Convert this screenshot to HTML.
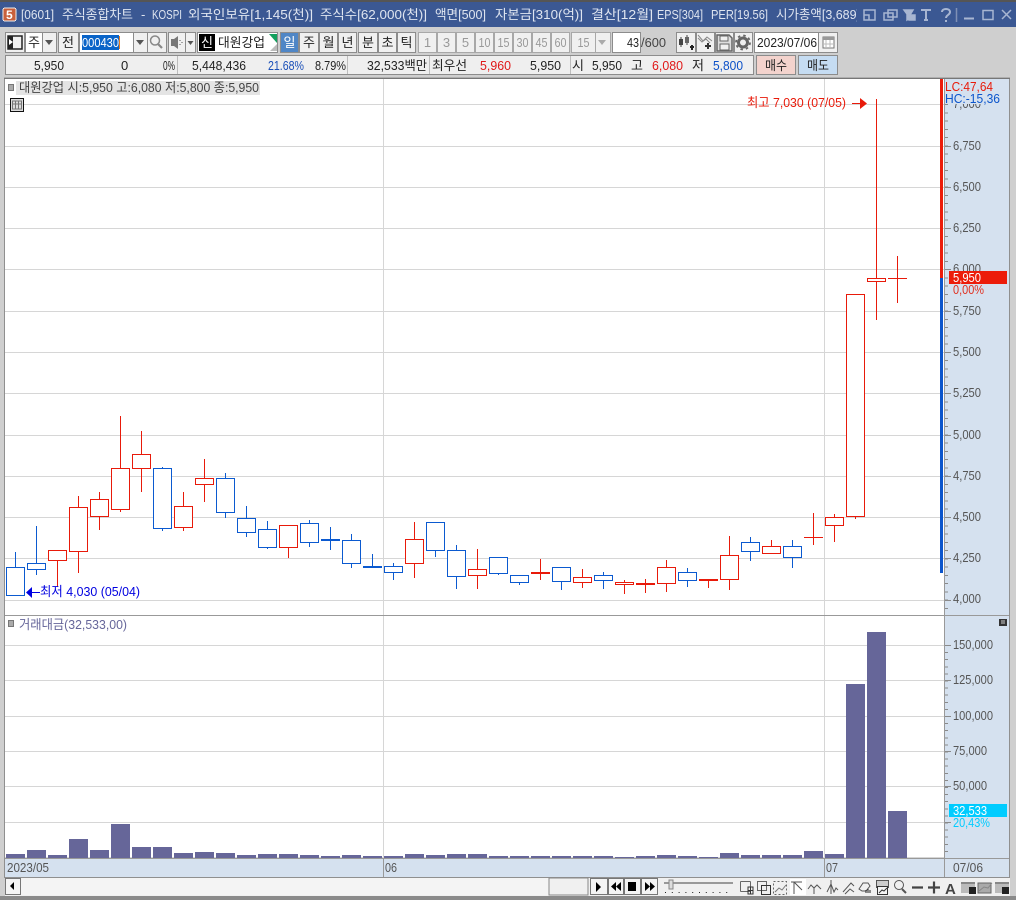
<!DOCTYPE html>
<html lang="ko"><head><meta charset="utf-8"><title>주식종합차트</title>
<style>
html,body{margin:0;padding:0;width:1016px;height:900px;overflow:hidden;background:#cfcfcf}
svg{display:block}
text{font-family:"Liberation Sans","Noto Sans CJK KR",sans-serif;font-size:13px;fill:#222;white-space:pre}
.t text{fill:#dfe5f0}
.ax text{fill:#555}
.g text{fill:#999}
.b{fill:#f0f0f0;stroke:#8c8c8c}
rect,line{shape-rendering:crispEdges}
</style></head><body>
<svg width="1016" height="900" viewBox="0 0 1016 900" xmlns="http://www.w3.org/2000/svg">
<rect width="1016" height="900" fill="#cfcfcf"/>
<rect y="0" width="1016" height="2" fill="#555"/>
<rect y="2" width="1016" height="25" fill="#3b5893"/>
<rect x="3" y="8" width="13" height="13" rx="2" fill="#c8603c" stroke="#eee"/>
<text x="6" y="19" style="fill:#fff;font-weight:bold;font-size:12px">5</text>
<svg x="0" y="0" width="857" height="27"><g class="t">
<text x="21" y="19" textLength="33" lengthAdjust="spacingAndGlyphs">[0601]</text>
<text x="62" y="19" textLength="71" lengthAdjust="spacingAndGlyphs">주식종합차트</text>
<text x="141" y="19">-</text>
<text x="152" y="19" textLength="30" lengthAdjust="spacingAndGlyphs">KOSPI</text>
<text x="188" y="19" textLength="125" lengthAdjust="spacingAndGlyphs">외국인보유[1,145(천)]</text>
<text x="320" y="19" textLength="107" lengthAdjust="spacingAndGlyphs">주식수[62,000(천)]</text>
<text x="435" y="19" textLength="51" lengthAdjust="spacingAndGlyphs">액면[500]</text>
<text x="495" y="19" textLength="88" lengthAdjust="spacingAndGlyphs">자본금[310(억)]</text>
<text x="591" y="19" textLength="62" lengthAdjust="spacingAndGlyphs">결산[12월]</text>
<text x="657" y="19" textLength="46" lengthAdjust="spacingAndGlyphs">EPS[304]</text>
<text x="711" y="19" textLength="57" lengthAdjust="spacingAndGlyphs">PER[19.56]</text>
<text x="776" y="19" textLength="84" lengthAdjust="spacingAndGlyphs">시가총액[3,689]</text>
</g></svg>
<g fill="none" stroke="#a8b6d2" stroke-width="1.5">
<path d="M864 10h11v10h-11zM864 15h5v5"/>
<path d="M888 10h9v7h-9zM884 13h9v7h-9z"/>
<path d="M909 15h6v5h-6z" fill="#a8b6d2"/><path d="M904 10h9l-3 5v3l-3 2v-6z" fill="#a8b6d2"/>
<path d="M921 10h10M926 10v10M924 20h4" stroke-width="2"/>
<path d="M942 12c0-4 8-4 8 0 0 3-4 3-4 6M946 20v2" stroke-width="2"/>
<path d="M956.500 8v14" stroke="#7f90b5"/>
<path d="M964 18.500h10" stroke-width="2"/>
<path d="M983 10.500h10v9h-10z"/>
<path d="M1002 10l9 9M1011 10l-9 9"/>
</g>

<!-- toolbar row 1 -->
<g class="b">
<rect x="5.500" y="32.500" width="19" height="20"/><rect x="25.500" y="32.500" width="17" height="20" fill="#fff"/><rect x="42.500" y="32.500" width="14" height="20"/>
<rect x="58.500" y="32.500" width="20" height="20"/>
<rect x="79.500" y="32.500" width="54" height="20" fill="#fff"/><rect x="133.500" y="32.500" width="14" height="20"/><rect x="147.500" y="32.500" width="19" height="20"/>
<rect x="168.500" y="32.500" width="17" height="20"/><rect x="185.500" y="32.500" width="10" height="20"/>
<rect x="197.500" y="32.500" width="80" height="20" fill="#fff"/>
<rect x="280.500" y="32.500" width="18" height="20" fill="#4f86c6"/><rect x="299.500" y="32.500" width="19" height="20"/><rect x="319.500" y="32.500" width="18" height="20"/><rect x="338.500" y="32.500" width="18" height="20"/>
<rect x="358.500" y="32.500" width="19" height="20"/><rect x="378.500" y="32.500" width="18" height="20"/><rect x="397.500" y="32.500" width="18" height="20"/>
<g style="stroke:#a8a8a8">
<rect x="418.500" y="32.500" width="18" height="20"/><rect x="437.500" y="32.500" width="18" height="20"/><rect x="456.500" y="32.500" width="18" height="20"/><rect x="475.500" y="32.500" width="18" height="20"/><rect x="494.500" y="32.500" width="18" height="20"/><rect x="513.500" y="32.500" width="18" height="20"/><rect x="532.500" y="32.500" width="18" height="20"/><rect x="551.500" y="32.500" width="18" height="20"/>
<rect x="571.500" y="32.500" width="24" height="20"/><rect x="595.500" y="32.500" width="15" height="20"/>
</g>
<rect x="612.500" y="32.500" width="28" height="20" fill="#fff"/>
<rect x="676.500" y="32.500" width="19" height="20"/><rect x="696.500" y="32.500" width="18" height="20"/><rect x="715.500" y="32.500" width="18" height="20"/><rect x="734.500" y="32.500" width="18" height="20"/>
<rect x="754.500" y="32.500" width="64" height="20" fill="#fff"/><rect x="818.500" y="32.500" width="19" height="20"/>
</g>
<!-- button icons -->
<path d="M8 36h14v13h-14z" fill="none" stroke="#222" stroke-width="1.500"/><path d="M8 36h5v13h-5z" fill="#222"/><path d="M9 39l4 3-4 3z" fill="#fff"/>
<path d="M45 40h8l-4 5z" fill="#555"/><path d="M136 40h8l-4 5z" fill="#555"/><path d="M187.500 41h6l-3 4z" fill="#555"/><path d="M598 40h8l-4 5z" fill="#aaa"/>
<circle cx="155" cy="40.500" r="4.500" fill="none" stroke="#888" stroke-width="1.500"/><path d="M158 44l4 4" stroke="#888" stroke-width="2.200"/>
<path d="M171 39h3l4-3v13l-4-3h-3z" fill="#777"/><path d="M180 40v1M180 44v1M182 42v1" stroke="#555"/>
<rect x="199" y="34" width="16" height="17" fill="#000"/>
<path d="M269 34h8v9z" fill="#13a05e"/><path d="M277 44v7h-7z" fill="#bbb"/>
<g text-anchor="middle">
<text x="34" y="47">주</text><text x="68" y="47">전</text>
<text x="207" y="47" style="fill:#fff">신</text>
<text x="289.500" y="47" style="fill:#fff">일</text><text x="309" y="47">주</text><text x="328.500" y="47">월</text><text x="347.500" y="47">년</text>
<text x="368" y="47">분</text><text x="387.500" y="47">초</text><text x="406.500" y="47">틱</text>
</g>
<rect x="82" y="35" width="37" height="15" fill="#0a64c8"/><rect x="119" y="36" width="1" height="13" fill="#e87a1a"/>
<text x="82" y="47" textLength="37" lengthAdjust="spacingAndGlyphs" style="fill:#fff">000430</text>
<text x="218" y="47" textLength="47" lengthAdjust="spacingAndGlyphs">대원강업</text>
<g class="g" text-anchor="middle">
<text x="427.500" y="47">1</text><text x="446.500" y="47">3</text><text x="465.500" y="47">5</text><text x="484.500" y="47" textLength="12" lengthAdjust="spacingAndGlyphs">10</text><text x="503.500" y="47" textLength="12" lengthAdjust="spacingAndGlyphs">15</text><text x="522.500" y="47" textLength="12" lengthAdjust="spacingAndGlyphs">30</text><text x="541.500" y="47" textLength="12" lengthAdjust="spacingAndGlyphs">45</text><text x="560.500" y="47" textLength="12" lengthAdjust="spacingAndGlyphs">60</text><text x="583.500" y="47" textLength="12" lengthAdjust="spacingAndGlyphs">15</text>
</g>
<text x="627" y="47" textLength="12" lengthAdjust="spacingAndGlyphs">43</text>
<text x="641" y="47" textLength="25" lengthAdjust="spacingAndGlyphs" style="fill:#444">/600</text>
<!-- right tool icons -->
<path d="M681 37v10M687 35v10" stroke="#444"/><rect x="679" y="39" width="4" height="6" fill="#444"/><rect x="685" y="37" width="4" height="6" fill="#666"/><path d="M690 47h4M692 45v5" stroke="#222" stroke-width="2"/>
<path d="M698 38l4 4 4-3 4 4M698 35l5 6 4-4 5 4" fill="none" stroke="#888"/><path d="M705 46h6M708 43v6" stroke="#333" stroke-width="2"/>
<path d="M717 35h12l3 3v13h-15z" fill="#ddd" stroke="#666" stroke-width="1.500"/><rect x="720" y="36" width="8" height="5" fill="#f0f0f0" stroke="#666"/><rect x="720" y="44" width="9" height="6" fill="#f0f0f0" stroke="#666"/>
<circle cx="743" cy="42.500" r="4.500" fill="none" stroke="#666" stroke-width="3"/><circle cx="743" cy="42.500" r="7" fill="none" stroke="#666" stroke-width="1.800" stroke-dasharray="2.500 3"/>
<text x="757" y="47" textLength="60" lengthAdjust="spacingAndGlyphs">2023/07/06</text>
<rect x="823" y="37" width="11" height="11" fill="#fff" stroke="#777"/><rect x="823" y="37" width="11" height="3" fill="#999"/><path d="M826 40v8M830 40v8M823 44h11" stroke="#bbb"/>

<!-- row 2 -->
<rect x="5.500" y="55.500" width="748" height="19" fill="#efefef" stroke="#8c8c8c"/>
<path d="M177.500 56v18M347.500 56v18M429.500 56v18M570.500 56v18" stroke="#bdbdbd"/>
<text x="34" y="70" textLength="30" lengthAdjust="spacingAndGlyphs">5,950</text>
<text x="121" y="70">0</text>
<text x="163" y="70" textLength="12" lengthAdjust="spacingAndGlyphs">0%</text>
<text x="192" y="70" textLength="54" lengthAdjust="spacingAndGlyphs">5,448,436</text>
<text x="268" y="70" textLength="36" lengthAdjust="spacingAndGlyphs" style="fill:#1a4fb8">21.68%</text>
<text x="315" y="70" textLength="31" lengthAdjust="spacingAndGlyphs">8.79%</text>
<text x="367" y="70" textLength="60" lengthAdjust="spacingAndGlyphs">32,533백만</text>
<text x="432" y="70" textLength="35" lengthAdjust="spacingAndGlyphs">최우선</text>
<text x="480" y="70" textLength="31" lengthAdjust="spacingAndGlyphs" style="fill:#e01818">5,960</text>
<text x="530" y="70" textLength="31" lengthAdjust="spacingAndGlyphs">5,950</text>
<text x="572" y="70">시</text>
<text x="592" y="70" textLength="30" lengthAdjust="spacingAndGlyphs">5,950</text>
<text x="631" y="70">고</text>
<text x="652" y="70" textLength="31" lengthAdjust="spacingAndGlyphs" style="fill:#e01818">6,080</text>
<text x="692" y="70">저</text>
<text x="713" y="70" textLength="30" lengthAdjust="spacingAndGlyphs" style="fill:#0b50c8">5,800</text>
<rect x="756.500" y="55.500" width="39" height="19" fill="#f3d3cd" stroke="#8c8c8c"/>
<rect x="798.500" y="55.500" width="39" height="19" fill="#c5dcf2" stroke="#8c8c8c"/>
<text x="765" y="70" textLength="22" lengthAdjust="spacingAndGlyphs">매수</text>
<text x="807" y="70" textLength="22" lengthAdjust="spacingAndGlyphs">매도</text>

<!-- chart area -->
<rect x="5" y="79" width="939" height="780" fill="#fff"/>
<rect x="945" y="79" width="64" height="798" fill="#d5e1ef"/>
<rect x="5" y="859" width="940" height="18" fill="#d5e1ef"/>
<g fill="none" stroke="#d6d6d6">
<path d="M5 104.500H944M5 146.500H944M5 187.500H944M5 228.500H944M5 269.500H944M5 311.500H944M5 352.500H944M5 393.500H944M5 435.500H944M5 476.500H944M5 517.500H944M5 558.500H944M5 600.500H944"/>
<path d="M5 645.500H944M5 680.500H944M5 716.500H944M5 751.500H944M5 786.500H944M5 822.500H944M5 857.500H944"/>
<path d="M383.500 79V859M824.500 79V859"/>
</g>
<path d="M4.500 78V877.500H1009.500V78H4.500z" fill="none" stroke="#8f8f8f"/>
<path d="M4 78.500H1010" stroke="#777"/>
<path d="M5 615.500H1009M5 858.500H1009M944.500 79V877M383.500 859V877M824.500 859V877" stroke="#999"/>
<rect x="940" y="79" width="3" height="199" fill="#ec1c0a"/>
<rect x="940" y="278" width="3" height="295" fill="#0b55cc"/>
<!-- axis ticks -->
<g fill="none" stroke="#8a8a8a">
<line x1="946.500" y1="104" x2="946.500" y2="615" stroke-width="3" stroke-dasharray="1 7.260"/>
<line x1="946.500" y1="645" x2="946.500" y2="858" stroke-width="3" stroke-dasharray="1 6.100"/>
<path d="M945 146.500h6M945 187.500h6M945 228.500h6M945 269.500h6M945 311.500h6M945 352.500h6M945 393.500h6M945 435.500h6M945 476.500h6M945 517.500h6M945 558.500h6M945 600.500h6M945 645.500h6M945 680.500h6M945 716.500h6M945 751.500h6M945 786.500h6M945 822.500h6"/>
</g>
<g class="ax">
<text x="953" y="108" textLength="28" lengthAdjust="spacingAndGlyphs">7,000</text>
<rect x="945" y="79" width="62" height="25" fill="#d5e1ef"/>
<text x="953" y="150" textLength="28" lengthAdjust="spacingAndGlyphs">6,750</text>
<text x="953" y="191" textLength="28" lengthAdjust="spacingAndGlyphs">6,500</text>
<text x="953" y="232" textLength="28" lengthAdjust="spacingAndGlyphs">6,250</text>
<text x="953" y="273" textLength="28" lengthAdjust="spacingAndGlyphs">6,000</text>
<text x="953" y="315" textLength="28" lengthAdjust="spacingAndGlyphs">5,750</text>
<text x="953" y="356" textLength="28" lengthAdjust="spacingAndGlyphs">5,500</text>
<text x="953" y="397" textLength="28" lengthAdjust="spacingAndGlyphs">5,250</text>
<text x="953" y="439" textLength="28" lengthAdjust="spacingAndGlyphs">5,000</text>
<text x="953" y="480" textLength="28" lengthAdjust="spacingAndGlyphs">4,750</text>
<text x="953" y="521" textLength="28" lengthAdjust="spacingAndGlyphs">4,500</text>
<text x="953" y="562" textLength="28" lengthAdjust="spacingAndGlyphs">4,250</text>
<text x="953" y="603" textLength="28" lengthAdjust="spacingAndGlyphs">4,000</text>
<text x="953" y="649" textLength="40" lengthAdjust="spacingAndGlyphs">150,000</text>
<text x="953" y="684" textLength="40" lengthAdjust="spacingAndGlyphs">125,000</text>
<text x="953" y="720" textLength="40" lengthAdjust="spacingAndGlyphs">100,000</text>
<text x="953" y="755" textLength="34" lengthAdjust="spacingAndGlyphs">75,000</text>
<text x="953" y="790" textLength="34" lengthAdjust="spacingAndGlyphs">50,000</text>
<text x="953" y="872" textLength="30" lengthAdjust="spacingAndGlyphs">07/06</text>
<text x="7" y="872" textLength="42" lengthAdjust="spacingAndGlyphs">2023/05</text>
<text x="385" y="872" textLength="12" lengthAdjust="spacingAndGlyphs">06</text>
<text x="826" y="872" textLength="12" lengthAdjust="spacingAndGlyphs">07</text>
</g>
<text x="945" y="91" textLength="48" lengthAdjust="spacingAndGlyphs" style="fill:#e81a0a">LC:47,64</text>
<text x="945" y="103" textLength="55" lengthAdjust="spacingAndGlyphs" style="fill:#0b55cc">HC:-15,36</text>
<rect x="949" y="271" width="58" height="13" fill="#ec1c0a"/>
<text x="953" y="282" textLength="28" lengthAdjust="spacingAndGlyphs" style="fill:#fff">5,950</text>
<text x="953" y="294" textLength="31" lengthAdjust="spacingAndGlyphs" style="fill:#e03020">0,00%</text>
<rect x="949" y="804" width="58" height="13" fill="#00ccff"/>
<text x="953" y="815" textLength="34" lengthAdjust="spacingAndGlyphs" style="fill:#fff">32,533</text>
<text x="953" y="827" textLength="37" lengthAdjust="spacingAndGlyphs" style="fill:#00ccff">20,43%</text>

<!-- labels -->
<rect x="8.500" y="84.500" width="5" height="6" fill="#aaa" stroke="#777"/>
<rect x="16" y="81" width="244" height="14" fill="#e4e4e4"/>
<text x="19" y="92" textLength="240" lengthAdjust="spacingAndGlyphs" style="fill:#444">대원강업 시:5,950 고:6,080 저:5,800 종:5,950</text>
<rect x="10.500" y="98.500" width="13" height="13" fill="#ddd" stroke="#111"/><path d="M12.500 101h9v8h-9zM15.500 101v8M18.500 101v8M12.500 104h9" fill="none" stroke="#777"/>
<rect x="8.500" y="620.500" width="5" height="6" fill="#aaa" stroke="#777"/>
<text x="19" y="629" textLength="108" lengthAdjust="spacingAndGlyphs" style="fill:#66669a">거래대금(32,533,00)</text>
<rect x="999" y="619" width="8" height="7" fill="#333"/><path d="M1001 621h4M1001 623h4" stroke="#ccc"/>

<!-- volume bars -->
<g fill="#666699">
<rect x="6" y="854" width="19" height="4"/><rect x="27" y="850" width="19" height="8"/><rect x="48" y="855" width="19" height="3"/><rect x="69" y="839" width="19" height="19"/><rect x="90" y="850" width="19" height="8"/><rect x="111" y="824" width="19" height="34"/><rect x="132" y="847" width="19" height="11"/><rect x="153" y="847" width="19" height="11"/><rect x="174" y="853" width="19" height="5"/><rect x="195" y="852" width="19" height="6"/><rect x="216" y="853" width="19" height="5"/><rect x="237" y="855" width="19" height="3"/><rect x="258" y="854" width="19" height="4"/><rect x="279" y="854" width="19" height="4"/><rect x="300" y="855" width="19" height="3"/><rect x="321" y="856" width="19" height="2"/><rect x="342" y="855" width="19" height="3"/><rect x="363" y="856" width="19" height="2"/><rect x="384" y="856" width="19" height="2"/><rect x="405" y="854" width="19" height="4"/><rect x="426" y="855" width="19" height="3"/><rect x="447" y="854" width="19" height="4"/><rect x="468" y="854" width="19" height="4"/><rect x="489" y="856" width="19" height="2"/><rect x="510" y="856" width="19" height="2"/><rect x="531" y="856" width="19" height="2"/><rect x="552" y="856" width="19" height="2"/><rect x="573" y="856" width="19" height="2"/><rect x="594" y="856" width="19" height="2"/><rect x="615" y="857" width="19" height="1"/><rect x="636" y="856" width="19" height="2"/><rect x="657" y="855" width="19" height="3"/><rect x="678" y="856" width="19" height="2"/><rect x="699" y="857" width="19" height="1"/><rect x="720" y="853" width="19" height="5"/><rect x="741" y="855" width="19" height="3"/><rect x="762" y="855" width="19" height="3"/><rect x="783" y="855" width="19" height="3"/><rect x="804" y="851" width="19" height="7"/><rect x="825" y="854" width="19" height="4"/><rect x="846" y="684" width="19" height="174"/><rect x="867" y="632" width="19" height="226"/><rect x="888" y="811" width="19" height="47"/>
</g>

<!-- blue candles -->
<g stroke="#0b5ad0" fill="#fff" shape-rendering="crispEdges">
<path d="M15.500 552V567M36.500 526V575"/>
<rect x="6.500" y="567.500" width="18" height="28"/><rect x="27.500" y="563.500" width="18" height="6"/>
<path d="M162.500 467V531"/><rect x="153.500" y="468.500" width="18" height="60"/>
<path d="M225.500 473V518"/><rect x="216.500" y="478.500" width="18" height="34"/>
<path d="M246.500 506V537"/><rect x="237.500" y="518.500" width="18" height="14"/>
<path d="M267.500 521V549"/><rect x="258.500" y="529.500" width="18" height="18"/>
<path d="M309.500 520V547"/><rect x="300.500" y="523.500" width="18" height="19"/>
<path d="M330.500 527V550"/><rect x="321" y="539" width="19" height="2" fill="#0b5ad0" stroke="none"/>
<path d="M351.500 534V568"/><rect x="342.500" y="540.500" width="18" height="23"/>
<path d="M372.500 554V567"/><rect x="363" y="566" width="19" height="2" fill="#0b5ad0" stroke="none"/>
<path d="M393.500 563V580"/><rect x="384.500" y="566.500" width="18" height="6"/>
<path d="M435.500 550V557"/><rect x="426.500" y="522.500" width="18" height="28"/>
<path d="M456.500 545V589"/><rect x="447.500" y="550.500" width="18" height="26"/>
<path d="M498.500 573V575"/><rect x="489.500" y="557.500" width="18" height="16"/>
<path d="M519.500 582V585"/><rect x="510.500" y="575.500" width="18" height="7"/>
<path d="M561.500 581V590"/><rect x="552.500" y="567.500" width="18" height="14"/>
<path d="M603.500 572V589"/><rect x="594.500" y="575.500" width="18" height="5"/>
<path d="M687.500 568V587"/><rect x="678.500" y="572.500" width="18" height="8"/>
<path d="M750.500 537V561"/><rect x="741.500" y="542.500" width="18" height="9"/>
<path d="M792.500 540V568"/><rect x="783.500" y="546.500" width="18" height="11"/>
</g>
<!-- red candles -->
<g stroke="#e81a0a" fill="#fff" shape-rendering="crispEdges">
<path d="M57.500 550V587"/><rect x="48.500" y="550.500" width="18" height="10"/>
<path d="M78.500 496V573"/><rect x="69.500" y="507.500" width="18" height="44"/>
<path d="M99.500 492V530"/><rect x="90.500" y="499.500" width="18" height="17"/>
<path d="M120.500 416V512"/><rect x="111.500" y="468.500" width="18" height="41"/>
<path d="M141.500 431V492"/><rect x="132.500" y="454.500" width="18" height="14"/>
<path d="M183.500 492V531"/><rect x="174.500" y="506.500" width="18" height="21"/>
<path d="M204.500 459V502"/><rect x="195.500" y="478.500" width="18" height="6"/>
<path d="M288.500 525V558"/><rect x="279.500" y="525.500" width="18" height="22"/>
<path d="M414.500 522V578"/><rect x="405.500" y="539.500" width="18" height="24"/>
<path d="M477.500 549V589"/><rect x="468.500" y="569.500" width="18" height="6"/>
<path d="M540.500 559V580"/><rect x="531" y="572" width="19" height="2" fill="#e81a0a" stroke="none"/>
<path d="M582.500 569V588"/><rect x="573.500" y="577.500" width="18" height="5"/>
<path d="M624.500 580V594"/><rect x="615.500" y="582.500" width="18" height="2"/>
<path d="M645.500 579V593"/><rect x="636" y="583" width="19" height="2" fill="#e81a0a" stroke="none"/>
<path d="M666.500 560V592"/><rect x="657.500" y="567.500" width="18" height="16"/>
<path d="M708.500 579V588"/><rect x="699" y="579" width="19" height="2" fill="#e81a0a" stroke="none"/>
<path d="M729.500 536V590"/><rect x="720.500" y="555.500" width="18" height="24"/>
<path d="M771.500 540V554"/><rect x="762.500" y="546.500" width="18" height="7"/>
<path d="M813.500 513V545M804 537.500H823"/>
<path d="M834.500 514V542"/><rect x="825.500" y="517.500" width="18" height="8"/>
<path d="M855.500 516V519"/><rect x="846.500" y="294.500" width="18" height="222"/>
<path d="M876.500 99V320"/><rect x="867.500" y="278.500" width="18" height="3"/>
<path d="M897.500 256V303M888 278.500H907"/>
</g>
<!-- high / low annotations -->
<text x="747" y="107" textLength="99" lengthAdjust="spacingAndGlyphs" style="fill:#e81a0a">최고 7,030 (07/05)</text>
<path d="M852 103.500h9" stroke="#e81a0a"/><path d="M860 98l7 5.500-7 5.500z" fill="#e81a0a"/>
<text x="40" y="596" textLength="100" lengthAdjust="spacingAndGlyphs" style="fill:#0000e0">최저 4,030 (05/04)</text>
<path d="M30 592.500h10" stroke="#0000e0"/><path d="M32 587l-6 5.500 6 5.500z" fill="#0000e0"/>

<!-- bottom scroller -->
<rect x="5" y="878" width="1005" height="18" fill="#f0f0f0"/>
<rect x="20" y="878" width="529" height="17" fill="#f4f4f4"/>
<rect x="549" y="878" width="39" height="17" fill="#f0f0f0" stroke="#888"/>
<rect x="0" y="896" width="1016" height="4" fill="#8a8a8a"/>
<g fill="#f4f4f4" stroke="#777">
<rect x="5.500" y="878.500" width="15" height="16"/>
<rect x="590.500" y="878.500" width="17" height="16"/><rect x="608.500" y="878.500" width="15" height="16"/><rect x="624.500" y="878.500" width="16" height="16"/><rect x="641.500" y="878.500" width="16" height="16"/>
</g>
<path d="M14 882v8l-4-4z" fill="#000"/>
<path d="M596 882l5 5-5 5z" fill="#000"/>
<path d="M616 882v9l-5-4.500zM621 882v9l-5-4.500z" fill="#000"/>
<rect x="628" y="882" width="8" height="9" fill="#000"/>
<path d="M645 882v9l5-4.500zM650 882v9l5-4.500z" fill="#000"/>
<!-- slider -->
<path d="M664 883h69" stroke="#999" stroke-width="2"/>
<rect x="669" y="880" width="4" height="9" fill="#ddd" stroke="#888"/>
<path d="M665 892.500h68" stroke="#222" stroke-dasharray="1 5.800"/>
<!-- right icons -->
<g fill="none" stroke="#666">
<rect x="740.500" y="881.500" width="10" height="10" rx="1"/><path d="M748 887h5v7h-5zM748 890.500h5M750.500 887v7" stroke="#333"/>
<rect x="757.500" y="881.500" width="9" height="9"/><rect x="761.500" y="885.500" width="9" height="9" stroke="#333"/>
<rect x="773.500" y="881.500" width="13" height="13" stroke-dasharray="2 2"/><path d="M775 892l4-4 3 2 4-5" stroke="#777"/>
</g>
<rect x="790" y="879" width="16" height="16" fill="#fff"/>
<g fill="none" stroke="#555">
<path d="M794 894v-12h8M794 882l8 8M794 882h-3" />
<path d="M808 889l3-4 3 3 3-3 4 4M814 888v6"/>
<path d="M827 892l4-8 3 8 2-4 2 2M831 880v14"/>
<path d="M843 892l8-9 3 3M845 894l5-5 4 3"/>
<path d="M859 889l4-6h5l2 3-4 5h-4z"/><path d="M866 893v-3M868 893v-4M870 893v-3" stroke="#222"/>
<rect x="876.500" y="880.500" width="12" height="7" fill="#ccc"/><rect x="877.500" y="886.500" width="10" height="8" fill="#f4f4f4" stroke="#333"/><path d="M879 893l3-3 2 1 3-3" stroke="#333"/>
<circle cx="899" cy="885" r="4.500"/><path d="M902 889l4 4" stroke-width="2"/>
<path d="M912 887.500h11M928 887.500h12M934 881.500v12" stroke="#444" stroke-width="2.200"/>
</g>
<text x="945" y="894" style="font-size:15px;font-weight:bold;fill:#444">A</text>
<rect x="961" y="882" width="14" height="11" fill="#bbb"/><rect x="961" y="882" width="14" height="2" fill="#888"/><rect x="969" y="887" width="7" height="7" fill="#222"/>
<rect x="978" y="883" width="13" height="10" fill="#aaa" stroke="#666"/><path d="M979 891l5-4 4 1 4-5" fill="none" stroke="#888"/>
<rect x="995" y="882" width="14" height="11" fill="#bbb"/><rect x="995" y="882" width="14" height="2" fill="#888"/><rect x="1002" y="887" width="7" height="7" fill="#222"/>
</svg>
</body></html>
